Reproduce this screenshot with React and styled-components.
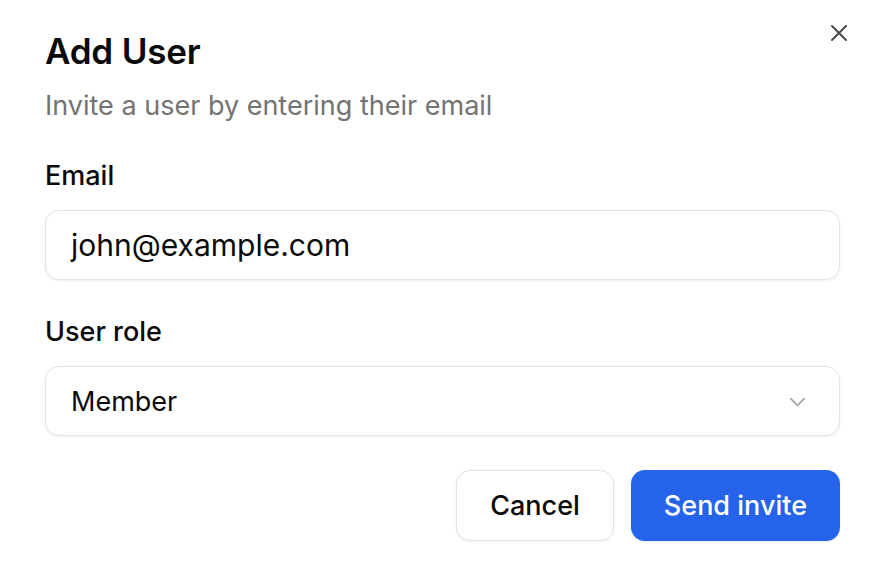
import React from "react";
import styled, {createGlobalStyle} from "styled-components";

const Global = createGlobalStyle`
  html, body {
    margin: 0;
    padding: 0;
    background: #ffffff;
    font-family: Inter, "Noto Sans", sans-serif;
    color: #0a0a0a;
  }
`;

const Dialog = styled.div`
  position: relative;
  box-sizing: border-box;
  width: 872px;
  height: 572px;
  padding: 30px 33px 0 45px;
  display: flex;
  flex-direction: column;
`;

const CloseButton = styled.button`
  position: absolute;
  top: 20px;
  right: 20px;
  width: 26px;
  height: 26px;
  padding: 0;
  border: none;
  background: none;
  color: #4a4a4a;
  display: flex;
  align-items: center;
  justify-content: center;
`;

const Title = styled.h2`
  margin: 0;
  font-size: 35px;
  font-weight: 600;
  line-height: 42px;
  letter-spacing: -0.2px;
`;

const Subtitle = styled.p`
  margin: 16px 0 0;
  font-size: 27px;
  line-height: 36px;
  color: #737373;
`;

const Field = styled.div`
  display: flex;
  flex-direction: column;
  gap: 17px;
  margin-top: 35px;
`;

const Label = styled.label`
  font-size: 27px;
  font-weight: 500;
  line-height: 34px;
`;

const Box = styled.div`
  box-sizing: border-box;
  width: 795px;
  height: 70px;
  border: 1.5px solid #e2e2e2;
  border-radius: 14px;
  box-shadow: 0 1px 3px rgba(0, 0, 0, 0.07);
  padding: 0 30px 0 25px;
  display: flex;
  align-items: center;
  justify-content: space-between;
  font-size: ${(p) => p.$size || 27}px;
  color: #0a0a0a;
`;

const Actions = styled.div`
  display: flex;
  justify-content: flex-end;
  gap: 17px;
  width: 795px;
  margin-top: 34px;
`;

const Button = styled.button`
  box-sizing: border-box;
  height: 71px;
  padding: 0 33px;
  border-radius: 14px;
  font-family: inherit;
  font-size: 27px;
  font-weight: 500;
  border: ${(p) => (p.$primary ? "none" : "1.5px solid #e2e2e2")};
  background: ${(p) => (p.$primary ? "#2563eb" : "#ffffff")};
  color: ${(p) => (p.$primary ? "#ffffff" : "#0a0a0a")};
  box-shadow: 0 1px 3px rgba(0, 0, 0, 0.07);
`;

export default function App() {
  return (
    <>
      <Global />
      <Dialog>
        <CloseButton aria-label="Close">
          <svg width="24" height="24" viewBox="0 0 24 24" fill="none" stroke="currentColor" strokeWidth="2" strokeLinecap="round">
            <path d="M19 5 5 19M5 5l14 14" />
          </svg>
        </CloseButton>
        <Title>Add User</Title>
        <Subtitle>Invite a user by entering their email</Subtitle>
        <Field>
          <Label>Email</Label>
          <Box $size={30}>john@example.com</Box>
        </Field>
        <Field>
          <Label>User role</Label>
          <Box>
            Member
            <svg width="23" height="23" viewBox="0 0 24 24" fill="none" stroke="#a3a3a3" strokeWidth="1.8" strokeLinecap="round" strokeLinejoin="round">
              <path d="m5 9 7 7 7-7" />
            </svg>
          </Box>
        </Field>
        <Actions>
          <Button>Cancel</Button>
          <Button $primary>Send invite</Button>
        </Actions>
      </Dialog>
    </>
  );
}
